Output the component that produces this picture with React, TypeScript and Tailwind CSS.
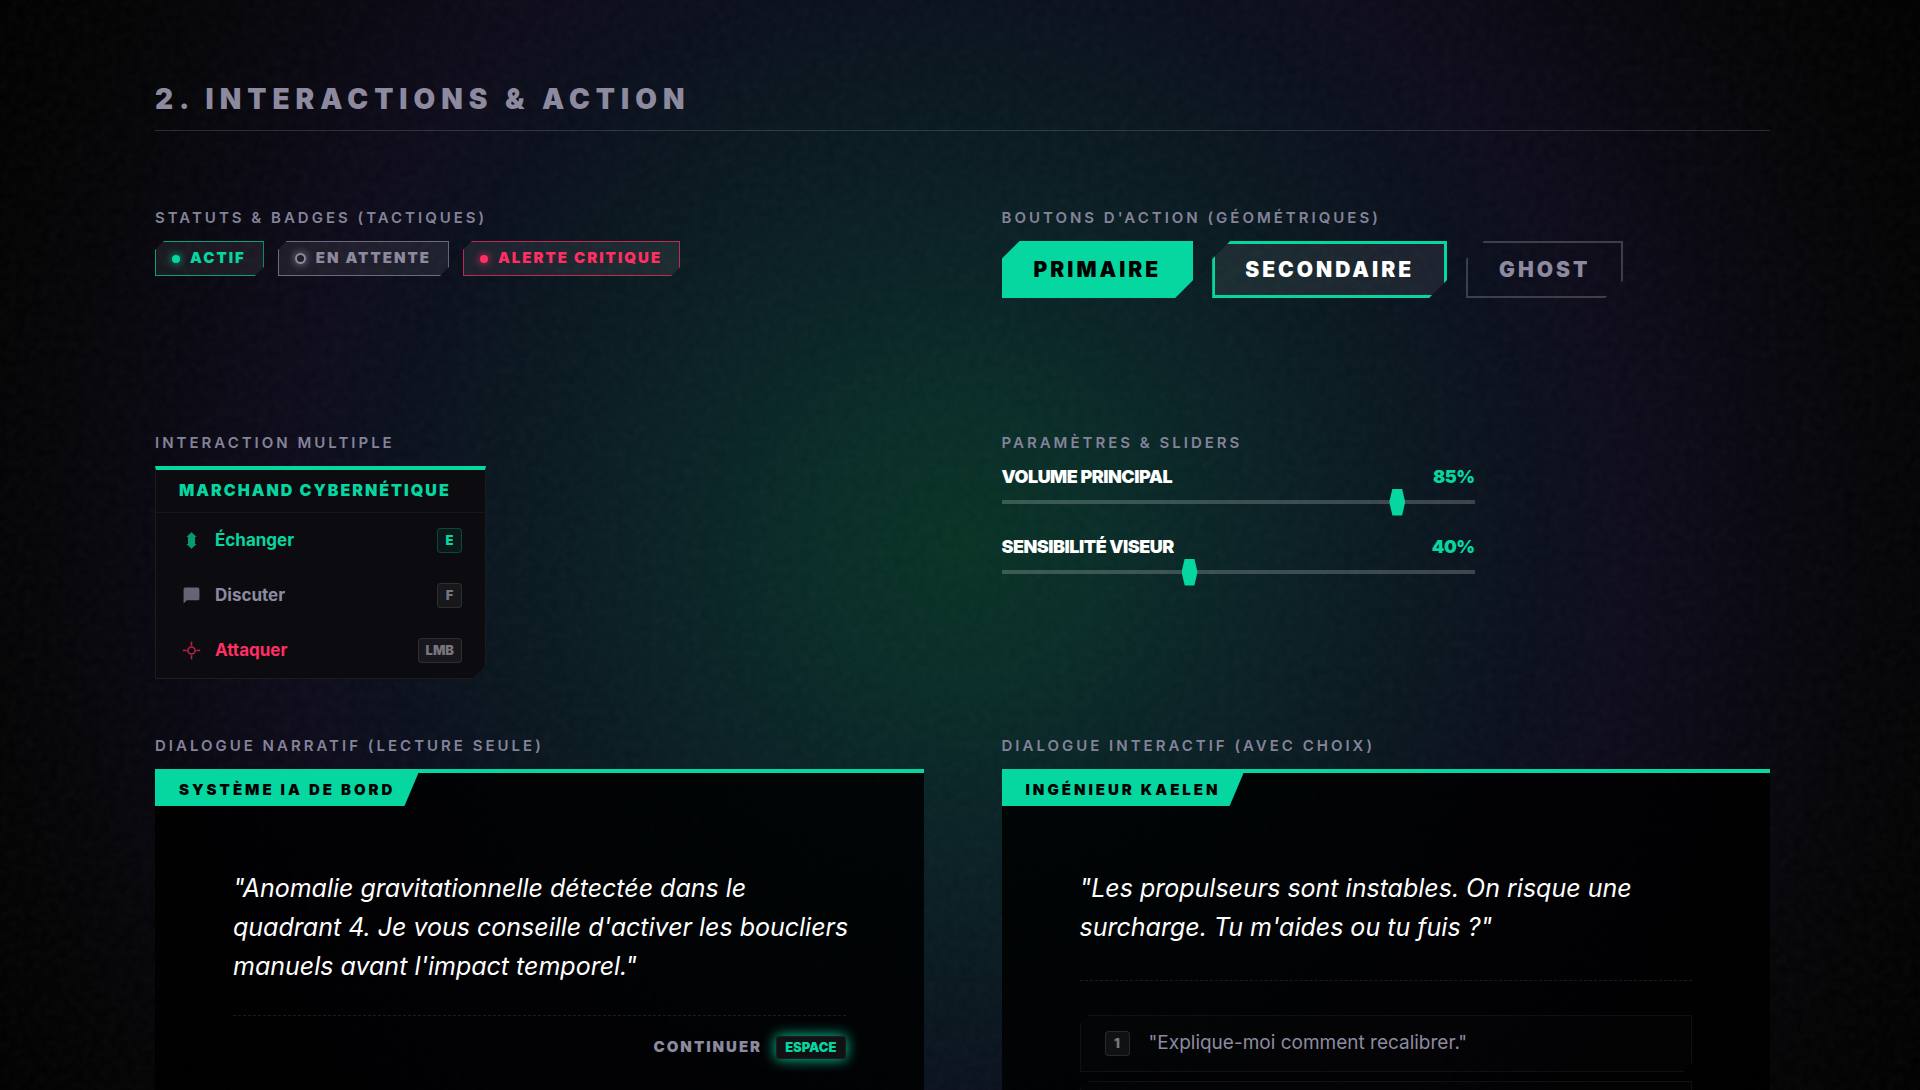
import { useState, type ReactNode } from "react";

const CUT_9 = "[clip-path:polygon(9px_0,100%_0,100%_calc(100%-9px),calc(100%-9px)_100%,0_100%,0_9px)]";
const CUT_18 = "[clip-path:polygon(18px_0,100%_0,100%_calc(100%-18px),calc(100%-18px)_100%,0_100%,0_18px)]";

type Tone = "success" | "neutral" | "danger";

const badges: { label: string; tone: Tone }[] = [
  { label: "Actif", tone: "success" },
  { label: "En attente", tone: "neutral" },
  { label: "Alerte critique", tone: "danger" },
];

const badgeStyles: Record<Tone, string> = {
  success: "border-[#06d6a0]/70 text-[#06d6a0]",
  neutral: "border-[#8d8a9f]/70 text-[#8d8a9f]",
  danger: "border-[#ff2e63]/70 text-[#ff2e63]",
};

const dotStyles: Record<Tone, string> = {
  success: "size-2 bg-[#06d6a0] shadow-[0_0_8px_#06d6a0]",
  neutral: "size-[11px] border-2 border-[#8d8a9f] shadow-[0_0_8px_#8d8a9f]",
  danger: "size-2 bg-[#ff2e63] shadow-[0_0_8px_#ff2e63]",
};

const actions: { label: string; keyName: string; tone: Tone; icon: ReactNode }[] = [
  {
    label: "Échanger",
    keyName: "E",
    tone: "success",
    icon: <path d="M12 1.500 5.500 7.500H7.500v9H5.500l6.500 6 6.500-6H16.500v-9h2z" fill="currentColor" />,
  },
  {
    label: "Discuter",
    keyName: "F",
    tone: "neutral",
    icon: <path d="M20 2H4a2 2 0 0 0-2 2v18l4-4h14a2 2 0 0 0 2-2V4a2 2 0 0 0-2-2z" fill="currentColor" />,
  },
  {
    label: "Attaquer",
    keyName: "LMB",
    tone: "danger",
    icon: (
      <g fill="none" stroke="currentColor" strokeWidth="2">
        <circle cx="12" cy="12" r="4.500" />
        <path d="M12 1v5M12 18v5M1 12h5M18 12h5" />
      </g>
    ),
  },
];

const actionStyles: Record<Tone, string> = {
  success: "text-[#06d6a0]",
  neutral: "text-[#8d8a9f]",
  danger: "text-[#ff2e63]",
};

function Section({ title, className = "", children }: { title: string; className?: string; children: ReactNode }) {
  return (
    <section className={`flex min-w-0 flex-col gap-3 ${className}`}>
      <h3 className="text-[15px] leading-[22px] font-semibold tracking-[3px] text-[#85839a] uppercase">{title}</h3>
      {children}
    </section>
  );
}

function Key({ children, active = false }: { children: ReactNode; active?: boolean }) {
  return (
    <kbd
      className={`inline-flex h-[25px] min-w-[25px] items-center justify-center rounded-[4px] border px-[7px] font-[Inter,sans-serif] text-[13px] font-black ${
        active ? "border-[#06d6a0]/25 bg-[#06d6a0]/7 text-[#06d6a0]" : "border-white/10 bg-white/5 text-[#77767c]"
      }`}
    >
      {children}
    </kbd>
  );
}

function Slider({ id, label, initial }: { id: string; label: string; initial: number }) {
  const [value, setValue] = useState(initial);

  return (
    <div className="flex flex-col">
      <div className="flex justify-between text-lg leading-[22px] font-black tracking-[-0.5px]">
        <label htmlFor={id} className="text-white uppercase">
          {label}
        </label>
        <output htmlFor={id} className="text-[#06d6a0]">
          {value}%
        </output>
      </div>
      <input
        id={id}
        type="range"
        min={1}
        max={100}
        value={value}
        onChange={(e) => setValue(Number(e.target.value))}
        className="h-[27px] w-full cursor-pointer appearance-none bg-transparent [&::-webkit-slider-runnable-track]:h-1 [&::-webkit-slider-runnable-track]:bg-white/20 [&::-webkit-slider-thumb]:mt-[-11px] [&::-webkit-slider-thumb]:h-[27px] [&::-webkit-slider-thumb]:w-4 [&::-webkit-slider-thumb]:appearance-none [&::-webkit-slider-thumb]:bg-[#06d6a0] [&::-webkit-slider-thumb]:[clip-path:polygon(20%_0,80%_0,100%_50%,80%_100%,20%_100%,0_50%)]"
      />
    </div>
  );
}

function Dialogue({ speaker, text, children }: { speaker: string; text: string; children: ReactNode }) {
  return (
    <article className="min-h-[340px] border-t-4 border-[#06d6a0] bg-black/85">
      <div className="inline-block bg-[#06d6a0] pr-[23px] pl-6 text-[15px] leading-[33px] font-black tracking-[3px] text-black uppercase [clip-path:polygon(0_0,100%_0,calc(100%-14px)_100%,0_100%)]">
        {speaker}
      </div>
      <div className="px-[78px] pt-[63px] pb-12">
        <p className="-mr-2 text-[25px] leading-[39px] text-white italic">{text}</p>
        {children}
      </div>
    </article>
  );
}

function Choice({ index, children }: { index: number; children: ReactNode }) {
  return (
    <button
      type="button"
      className={`flex h-[57px] w-full cursor-pointer items-center gap-[19px] border border-white/5 bg-white/[0.01] px-6 text-left text-[19px] text-[#8d8a9f] ${CUT_9}`}
    >
      <Key>{index}</Key>
      {children}
    </button>
  );
}

function Backdrop() {
  return (
    <div className="pointer-events-none absolute inset-0 bg-[radial-gradient(circle_farthest-corner_at_50%_50%,#083224_0%,#082c27_13%,#092225_25%,#09171f_41%,#0a0e1c_53%,#0d0b1a_61%,#090813_70%,#040406_84%,#000_100%)]">
      <svg className="size-full opacity-[0.04]" aria-hidden="true">
        <filter id="grain">
          <feTurbulence type="fractalNoise" baseFrequency="0.12" numOctaves="3" stitchTiles="stitch" />
          <feColorMatrix type="saturate" values="0" />
        </filter>
        <rect width="100%" height="100%" filter="url(#grain)" />
      </svg>
    </div>
  );
}

export default function App() {
  return (
    <div className="relative h-screen overflow-hidden bg-black font-[Inter,sans-serif]">
      <Backdrop />
      <main className="relative pt-[81px] pr-[150px] pl-[155px]">
        <h2 className="border-b border-white/15 pb-[13px] text-[28px] leading-9 font-black tracking-[6px] text-[#8d8a9f] uppercase">
          2. Interactions &amp; Action
        </h2>

        <div className="mt-[76px] grid grid-cols-2 gap-x-[78px] gap-y-[57px]">
          <Section title="Statuts & Badges (Tactiques)" className="min-h-[168px]">
            <div className="flex flex-wrap gap-[14px]">
              {badges.map((b) => (
                <span
                  key={b.label}
                  className={`inline-flex h-[35px] items-center gap-[10px] border bg-white/7 pr-[17px] pl-4 text-[15px] font-black tracking-[2px] uppercase ${CUT_9} ${badgeStyles[b.tone]}`}
                >
                  <span className={`shrink-0 rounded-full ${dotStyles[b.tone]}`} />
                  {b.label}
                </span>
              ))}
            </div>
          </Section>

          <Section title="Boutons d'action (Géométriques)">
            <div className="flex flex-wrap gap-[19px] text-[21px] font-black tracking-[3px]">
              <button type="button" className={`h-[57px] cursor-pointer bg-[#06d6a0] px-8 text-black uppercase ${CUT_18}`}>
                Primaire
              </button>
              <button
                type="button"
                className={`h-[57px] cursor-pointer border-3 border-[#06d6a0] bg-white/7 px-[30px] text-white uppercase ${CUT_18}`}
              >
                Secondaire
              </button>
              <button
                type="button"
                className={`h-[57px] cursor-pointer border-2 border-white/20 px-[31px] text-[#8d8a9f] uppercase ${CUT_18}`}
              >
                Ghost
              </button>
            </div>
          </Section>

          <Section title="Interaction Multiple">
            <div className="-mb-px w-[331px] border border-t-4 border-white/7 border-t-[#06d6a0] bg-[#0b0b10] [clip-path:polygon(0_0,100%_0,100%_calc(100%-14px),calc(100%-14px)_100%,0_100%)]">
              <h4 className="border-b border-white/5 px-[23px] pb-[2px] text-base leading-10 font-black tracking-[2px] text-[#06d6a0] uppercase">
                Marchand Cybernétique
              </h4>
              <ul>
                {actions.map((a) => (
                  <li key={a.label}>
                    <button
                      type="button"
                      className={`flex h-[55px] w-full cursor-pointer items-center gap-[14px] px-[23px] text-left text-[17px] font-bold ${actionStyles[a.tone]}`}
                    >
                      <svg viewBox="0 0 24 24" className="ml-[3px] size-[19px] opacity-70" aria-hidden="true">
                        {a.icon}
                      </svg>
                      <span className="flex-1">{a.label}</span>
                      <Key active={a.tone === "success"}>{a.keyName}</Key>
                    </button>
                  </li>
                ))}
              </ul>
            </div>
          </Section>

          <Section title="Paramètres & Sliders">
            <div className="flex w-full max-w-[473px] flex-col gap-[21px]">
              <Slider id="volume" label="Volume principal" initial={85} />
              <Slider id="sensitivity" label="Sensibilité viseur" initial={40} />
            </div>
          </Section>

          <Section title="Dialogue Narratif (Lecture seule)">
            <Dialogue
              speaker="Système IA de bord"
              text={`"Anomalie gravitationnelle détectée dans le quadrant 4. Je vous conseille d'activer les boucliers manuels avant l'impact temporel."`}
            >
              <div className="mt-[29px] flex justify-end border-t border-dashed border-white/10 pt-5">
                <button type="button" className="flex cursor-pointer items-center gap-[14px]">
                  <span className="text-[15px] font-black tracking-[2px] text-[#8d8a9f] uppercase">Continuer</span>
                  <kbd className="inline-flex h-[23px] items-center rounded-[3px] border border-white/5 bg-[#111114] px-2 font-[Inter,sans-serif] text-[13px] font-black text-[#06d6a0] shadow-[0_0_14px_#06d6a0] uppercase">
                    Espace
                  </kbd>
                </button>
              </div>
            </Dialogue>
          </Section>

          <Section title="Dialogue Interactif (Avec choix)">
            <Dialogue speaker="Ingénieur Kaelen" text={`"Les propulseurs sont instables. On risque une surcharge. Tu m'aides ou tu fuis ?"`}>
              <div className="mt-[33px] flex flex-col gap-[9px] border-t border-dashed border-white/10 pt-[34px]">
                <Choice index={1}>"Explique-moi comment recalibrer."</Choice>
                <div className={`h-[57px] border border-white/5 bg-white/[0.01] ${CUT_9}`} />
              </div>
            </Dialogue>
          </Section>
        </div>
      </main>
    </div>
  );
}
